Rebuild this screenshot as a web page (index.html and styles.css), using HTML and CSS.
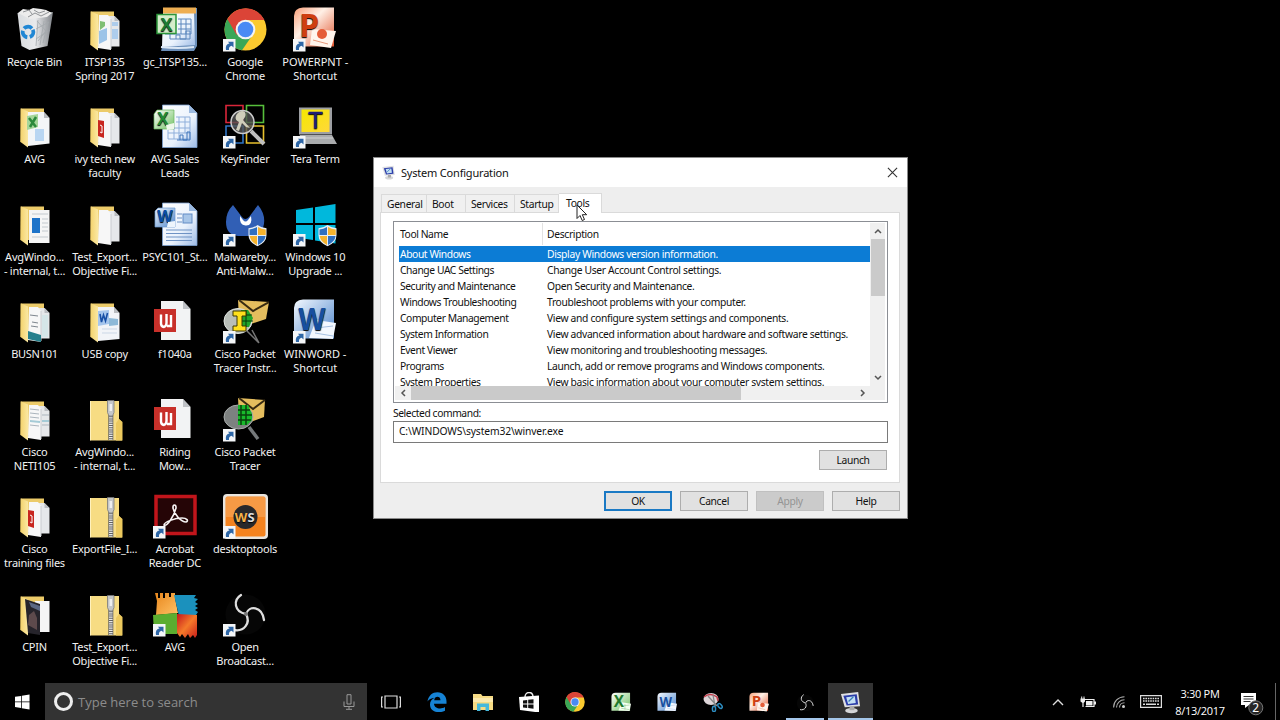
FILE: index.html
```
<!DOCTYPE html>
<html lang="en">
<head>
    <meta charset="UTF-8">
    <meta name="viewport" content="width=device-width, initial-scale=1.0">
    <title>System Configuration</title>
    <link rel="stylesheet" href="styles.css">
</head>
<body>
    <!-- Icon definitions -->
    <svg class="defs" width="0" height="0">
        <defs>
            <linearGradient id="gFolder" x1="0" x2="1"><stop offset="0" stop-color="#f3d26c"/><stop offset="1" stop-color="#fbe8a2"/></linearGradient>
            <linearGradient id="gPage" x1="0" y1="0" x2="1" y2="1"><stop offset="0" stop-color="#fff"/><stop offset=".6" stop-color="#eaf2fc"/><stop offset="1" stop-color="#9dbbe6"/></linearGradient>
            <linearGradient id="gGreen" x1="0" y1="0" x2="1" y2="1"><stop offset="0" stop-color="#fff"/><stop offset="1" stop-color="#72c263"/></linearGradient>
            <linearGradient id="gBlue" x1="0" y1="0" x2="1" y2="1"><stop offset="0" stop-color="#f4f9ff"/><stop offset="1" stop-color="#4e86cc"/></linearGradient>
            <linearGradient id="gRed" x1="0" y1="0" x2="1" y2="1"><stop offset="0" stop-color="#f9a17b"/><stop offset=".4" stop-color="#fff0e6"/><stop offset="1" stop-color="#e0532c"/></linearGradient>
            <linearGradient id="gBin" x1="0" x2="1"><stop offset="0" stop-color="#d9dcdf"/><stop offset=".5" stop-color="#e9eaec"/><stop offset="1" stop-color="#808489"/></linearGradient>
            <linearGradient id="gScreen" x1="0" y1="0" x2="1" y2="1"><stop offset="0" stop-color="#f5e800"/><stop offset="1" stop-color="#ffd83a"/></linearGradient>
            <linearGradient id="gOrange" x1="0" y1="0" x2="1" y2="1"><stop offset="0" stop-color="#e8861c"/><stop offset="1" stop-color="#ffc266"/></linearGradient>
            <linearGradient id="gAvgRed" x1="0" y1="0" x2="1" y2="1"><stop offset="0" stop-color="#c4161c"/><stop offset=".5" stop-color="#f47a2a"/><stop offset="1" stop-color="#c81d1a"/></linearGradient>

            <symbol id="shortcut" viewBox="0 0 48 48">
                <rect x="2" y="34" width="12.500" height="12.500" fill="#f4f6f8"/>
                <path d="M5 45c-.6-4 .8-6 3.500-6.400l-1.600-1.800h5.600v5.700l-1.800-1.700c-2 .3-3 1.600-2.700 4.200z" fill="#2d66a6"/>
            </symbol>
            <symbol id="shield" viewBox="0 0 48 48">
                <path d="M36.500 25q4 3 9 3.200v7q0 7-9 11-9-4-9-11v-7q5-.2 9-3.200z" fill="#e8eef4"/>
                <path d="M36 27v8h-7.500v-5.500q4-.3 7.500-2.500zM37 36h7.600q-.7 5.500-7.600 9z" fill="#2f6fc0"/>
                <path d="M37 27q3.500 2.200 7.700 2.500V35H37zM36 36v9q-6.500-3.500-7.300-9z" fill="#f5b32e"/>
            </symbol>
            <symbol id="folderBack" viewBox="0 0 48 48">
                <path d="M9.500 6.500h23.500v33.500H9.500z" fill="#eccb69"/>
                <path d="M10 6.500l7 3v36L9.500 40z" fill="url(#gFolder)"/>
            </symbol>
            <symbol id="pages" viewBox="0 0 48 48">
                <path d="M25 11h8.500l5 5v25.500H25z" fill="#e6e8ea"/>
                <path d="M18 10h9l3 4v31L17 43z" fill="#f7f7f7"/>
                <path d="M33.500 11v5h5z" fill="#b9bcc0"/>
                <path d="M30 14v30" stroke="#c9ccd0"/>
            </symbol>

            <symbol id="bin" viewBox="0 0 48 48">
                <path d="M6.500 8L42 7l-5.500 34-18 4-8-4z" fill="url(#gBin)"/>
                <path d="M7 8l5-4 6 1 4-2 8 1 5 1 6 3-5 4-17 2z" fill="#ececec"/>
                <path d="M12 7l6-2 3 4M23 5l5 3 6-2M17 12l7-4 6 3 8-4" stroke="#909396" fill="none"/>
                <path d="M27 15l-2 26M33 16l-4 24M37 18l-5 20M25 24l13-7M25 34l12-8M26 16l9 10-8 10" stroke="#a5a9ad" fill="none" stroke-width=".8"/>
                <circle cx="17" cy="27" r="5.300" fill="none" stroke="#2187d4" stroke-width="3.800" stroke-dasharray="8.600 2.500" transform="rotate(-25 17 27)"/>
            </symbol>
            <symbol id="folderDocs" viewBox="0 0 48 48">
                <use href="#folderBack"/><use href="#pages"/>
                <path d="M19 16l5 1v4l-5 4z" fill="#7fbf73"/><path d="M18 26l8-3v12l-8 4z" fill="#9cc4e8"/><path d="M31 17h6v4h-6zM31 24h6v10h-6z" fill="#aecdec"/>
            </symbol>
            <symbol id="folderExcel" viewBox="0 0 48 48">
                <use href="#folderBack"/>
                <path d="M17 10h16l5.500 6v25.500L17 44z" fill="#f4f6f8"/><path d="M33 10v6h5.500z" fill="#b9bcc0"/>
                <path d="M16 14l11-2v13l-11 3z" fill="#a5d69a"/><path d="M18 16l7 9M25 15l-6 10" stroke="#2c8a3c" stroke-width="2.500"/>
                <path d="M24 27h9v12h-9z" fill="#b9d6f2"/>
            </symbol>
            <symbol id="folderPdf" viewBox="0 0 48 48">
                <use href="#folderBack"/><use href="#pages"/>
                <path d="M17 18l6 1v17l-6-2z" fill="#c8271f"/><path d="M19 23l2 1v7l-2-1" fill="none" stroke="#fff"/>
            </symbol>
            <symbol id="folderNews" viewBox="0 0 48 48">
                <use href="#folderBack"/><path d="M18 10h20.500v33H18z" fill="#f5f5f5"/>
                <path d="M21 18h8v15h-8z" fill="#1d73c9"/><path d="M21 14h16M31 19h6M31 23h6M31 27h6M31 31h6M21 37h16" stroke="#c3c9ce"/>
            </symbol>
            <symbol id="folderPages" viewBox="0 0 48 48">
                <use href="#folderBack"/><use href="#pages"/>
            </symbol>
            <symbol id="folderBusn" viewBox="0 0 48 48">
                <use href="#folderBack"/><use href="#pages"/>
                <path d="M19 18l8 1M21 25l6 1M20 29l7 1" stroke="#7e868e"/><path d="M17 34l13 4v7l-13-3z" fill="#26808d"/><path d="M31 18h6v22h-6z" fill="#d5e6e8"/>
            </symbol>
            <symbol id="folderWord" viewBox="0 0 48 48">
                <use href="#folderBack"/>
                <path d="M17 10h16l5.500 6v26L17 44z" fill="#f2f4f8"/><path d="M33 10v6h5.500z" fill="#b9bcc0"/>
                <path d="M17 14l11-1v14l-11 2z" fill="#a6c6ed"/><path d="M19 17l1.500 8 2-7 2 6 2-8" stroke="#174fa6" stroke-width="1.600" fill="none"/>
                <path d="M28 21l9 1v6l-9 1z" fill="#8db9d8"/><path d="M21 32h15M21 36h15" stroke="#cbd7e6"/>
            </symbol>
            <symbol id="folderText" viewBox="0 0 48 48">
                <use href="#folderBack"/><use href="#pages"/>
                <path d="M19 14l9 1M19 18l9 1M19 22l9 1M19 30l9 1M31 20h7M31 30h7" stroke="#abb5bd"/><path d="M19 25l10 1v2l-10-1zM31 25h7v2h-7z" fill="#a5cbd6"/>
            </symbol>
            <symbol id="folderPhoto" viewBox="0 0 48 48">
                <use href="#folderBack"/><path d="M24 11h14.500v31H24z" fill="#f5f5f5"/>
                <path d="M14 9l15 5v31l-12-2z" fill="#26242b"/><path d="M18 25l5-4 3 7v12l-9-5z" fill="#5d4a4c"/><path d="M18 12l11 4v5l-9-4z" fill="#5b6884"/>
            </symbol>
            <symbol id="zip" viewBox="0 0 48 48">
                <path d="M9.500 6H38v18l3 3v18.500H9.500z" fill="#f7dc83"/><path d="M38 24l3.500 3v18.500H35V28z" fill="#ecc95e"/>
                <path d="M9.500 6v39.500" stroke="#fff1bd"/>
                <path d="M29.800 20v25" stroke="#606060" stroke-width="5"/><path d="M29.800 20v25" stroke="#e8e8e8" stroke-width="3.600" stroke-dasharray="1.200 1"/>
                <path d="M26.500 5.500h6.500v12l-1.500 3.500H28l-1.500-3.500z" fill="#c5c7c9" stroke="#77797b" stroke-width=".8"/><path d="M28.500 9v7h2.500V9z" fill="#efefef"/>
            </symbol>
            <symbol id="excelPad" viewBox="0 0 48 48">
                <path d="M12 3h34v38l-3 5H10l2-7z" fill="#6c8fb9"/><path d="M12 8h31l1 32-33 2z" fill="url(#gPage)"/><path d="M12 2.500h33v6H12z" fill="#eeae52"/>
                <path d="M27 14h13M27 19h13M27 24h13M14 29h26M30 14v15M35 14v15M40 14v15M19 29v5h20v-8h-4v8h-6v-4h-4v4" stroke="#5b86bd" fill="none"/>
                <path d="M10 42q18 2 33 0" stroke="#dbe7f5" fill="none" stroke-width="2"/>
                <rect x="6" y="9.500" width="19" height="19" fill="#d4edca" stroke="#2d963b" stroke-width="1.500"/><text x="15.500" y="25.500" class="ico-letter" font-size="18" fill="#1d7c32">X</text>
            </symbol>
            <symbol id="excelDoc" viewBox="0 0 48 48">
                <path d="M11.500 3H38l8 8v34.500H11.500z" fill="url(#gPage)" stroke="#7b9fcf" stroke-width=".8"/><path d="M38 3v8h8z" fill="#9bb9df"/>
                <path d="M25 15h14M25 20h14M17 26h22M17 31h22M17 37h22M17 26v11M23 26v11M28 15v22M34 15v16M39 15v22" stroke="#8fafdb" fill="none"/><path d="M26 38h13v-8h-3v8h-4v-5h-3v5" stroke="#3f74ba" fill="none"/>
                <path d="M6 8h17v19H3V12z" fill="url(#gGreen)" stroke="#68b45d" stroke-width=".7"/><text x="12" y="23" class="ico-letter" font-size="17" fill="#238a35">X</text><path d="M15 23l8-2v6l-7 1z" fill="#eef8ea"/>
            </symbol>
            <symbol id="wordDoc" viewBox="0 0 48 48">
                <path d="M11.500 3H38l8 8v34.500H11.500z" fill="url(#gPage)" stroke="#7b9fcf" stroke-width=".8"/><path d="M38 3v8h8z" fill="#9bb9df"/>
                <path d="M26 14h5M26 18h5M26 22h5M15 30h26M15 33.500h26M15 37h26M15 40.500h26" stroke="#6f93c4"/><rect x="32" y="14" width="9" height="9" fill="#a8c6e8" stroke="#628cc5"/>
                <path d="M7 8h17v19H4V11z" fill="url(#gBlue)" stroke="#6b98ce" stroke-width=".7"/><text x="14" y="22" class="ico-letter" font-size="16" fill="#0a4da5">W</text><path d="M17 22l7-1v6h-8z" fill="#eef5fc"/>
            </symbol>
            <symbol id="pdfDoc" viewBox="0 0 48 48">
                <path d="M10 4h22l7.500 8v31H10z" fill="#f2f3f4"/><path d="M32 4v8h7.500z" fill="#bec1c5"/>
                <rect x="3" y="12" width="22" height="23" fill="#c8302a"/>
                <path d="M10 17.500v9q0 3 3 3.500 2.500-1 2.500-4v-9M20 18v11h-4" stroke="#fff" stroke-width="2.400" fill="none"/>
            </symbol>
            <symbol id="acrobat" viewBox="0 0 48 48">
                <rect x="5" y="4.500" width="39" height="37" fill="#250506" stroke="#c1151b" stroke-width="3.500"/>
                <path d="M13 33c3 2 10-9 12-17 .4-4-3.500-4-3 0 1 6 8 14 13 14 3-1 1-4-4-4-7 0-18 4-18 7z" fill="none" stroke="#f6f3f3" stroke-width="1.600"/>
            </symbol>
            <symbol id="avg" viewBox="0 0 48 48">
                <path d="M4 3h3v5h2V3h3v5h2V3h4v4h2V3h4v5l3 15-22 2 1-14z" fill="url(#gOrange)"/>
                <path d="M23 5h22l-2 3 4 1-3 3 3 2-3 2 3 2-3 2 3 2-2 3-17 1z" fill="#1b91bd"/>
                <path d="M2 25l24-2v21H3z" fill="#5bad30"/>
                <path d="M26 24l20 1v20l-2 3-2-3-3 3-2-4-3 4-3-4-2 3-3-4z" fill="url(#gAvgRed)"/>
            </symbol>
            <symbol id="chrome" viewBox="0 0 48 48">
                <circle cx="24.500" cy="24.500" r="21" fill="#fbca2f"/>
                <path d="M24.500 24.500L6.300 14A21 21 0 0 0 21 45.200l11-16z" fill="#3aa757"/>
                <path d="M24.500 15h19A21 21 0 0 0 6.300 14l9.300 16z" fill="#db4437"/>
                <circle cx="24.500" cy="24.500" r="9.800" fill="#f4f4f4"/><circle cx="24.500" cy="24.500" r="7.800" fill="#4a8af4"/>
            </symbol>
            <symbol id="keyfinder" viewBox="0 0 48 48">
                <g fill="none" stroke-width="1.600"><path d="M5 3.500h17v17H5z" stroke="#d9263a"/><path d="M25.500 3.500h17v17h-17z" stroke="#56be3b"/><path d="M5 24h17v17H5z" stroke="#2f74c3"/><path d="M25.500 24h17v17h-17z" stroke="#e6c02d"/></g>
                <path d="M30 29l13 13" stroke="#bfbfbf" stroke-width="4"/>
                <circle cx="21.500" cy="20" r="11.500" fill="#555" fill-opacity=".8" stroke="#cbcbcb" stroke-width="1.500"/>
                <path d="M18 10c5-3 8 1 6 5l-2 3 7 8-4-1-4-4-3 8-3-1 3-8c-5-2-4-7 0-10z" fill="#d0cebb"/>
            </symbol>
            <symbol id="malware" viewBox="0 0 48 48">
                <path d="M12 5l9 12q3 4 7 0L37 5q9 11 5 23l-9 8H17Q5 35 5 22 5 12 12 5z" fill="#315fb5"/>
                <path d="M19 16l3 4q2.500 3 5 0l3-4q2 10-5.500 9.500Q18 25 19 16z" fill="#fff"/>
            </symbol>
            <symbol id="tracer" viewBox="0 0 48 48">
                <path d="M17 3l27 2-1 17-16 6-9-7z" fill="#e4bd5e"/><path d="M18 3l14 11L44 5" fill="none" stroke="#382b12" stroke-width="2"/>
                <path d="M28 32l9 12" stroke="#75797b" stroke-width="3.500"/>
                <ellipse cx="17.500" cy="22" rx="14.500" ry="12" fill="#7d8180" stroke="#a9adac"/>
                <path d="M17 10h10l4 9v6l-5 5h-9z" fill="#18b92b"/><path d="M20 10v20M25 10v20M17 15h12M17 20h14M17 25h13" stroke="#093f0e" stroke-width="1.500"/>
            </symbol>
            <symbol id="tracerI" viewBox="0 0 48 48">
                <path d="M17 3l31 2-3 17-18 6-9-7z" fill="#e4bd5e"/><path d="M18 3l14 11L48 5" fill="none" stroke="#382b12" stroke-width="2"/>
                <path d="M26 34l12 12M31 33l7 13" stroke="#777" stroke-width="1.500"/>
                <ellipse cx="17" cy="24" rx="14" ry="12.500" fill="#b8beb8" stroke="#e1e5e1"/>
                <path d="M20 13h7l5 8-4 9h-8z" fill="#20a52b"/><path d="M21 18h10M21 24h11M25 13v17" stroke="#073b09"/>
                <path d="M12 14h13v5h-4v10h4v5H12v-5h4V19h-4z" fill="#ffe01c" stroke="#3f3900"/>
            </symbol>
            <symbol id="ws" viewBox="0 0 48 48">
                <rect x="2" y="2" width="45" height="45" rx="4" fill="#e8e5df"/><rect x="4.500" y="4.500" width="40" height="40" rx="2" fill="#f4831f"/><path d="M5 5h39v20H5z" fill="#f69a45"/>
                <circle cx="24.500" cy="25" r="12" fill="#28282b"/><text x="20" y="30" class="ico-letter" font-size="13" fill="#f5b24a">W</text><text x="30" y="30" class="ico-letter" font-size="13" fill="#ddd">S</text>
            </symbol>
            <symbol id="obs" viewBox="0 0 48 48">
                <circle cx="24.500" cy="24.500" r="20" fill="#060606"/>
                <g fill="none" stroke="#dedede" stroke-width="2.300" stroke-linecap="round"><path d="M25 24C13 22 12 10 20 5"/><path d="M25 24c3-9 16-8 18 6"/><path d="M25 24c5 9-2 18-12 16"/></g><circle cx="25" cy="24" r="2" fill="#777"/>
            </symbol>
            <symbol id="powerpoint" viewBox="0 0 48 48">
                <path d="M12 2.500h31v39H3V11q0-8 9-8.500z" fill="url(#gRed)"/>
                <path d="M21 24l24 2-5 17-21-3z" fill="#fff5ed"/><circle cx="31" cy="29" r="5" fill="#e55d38"/><path d="M22 35l15 4" stroke="#e69a7c"/>
                <text x="18" y="32" class="ico-letter" font-size="32" fill="#cf3f10">P</text>
            </symbol>
            <symbol id="word" viewBox="0 0 48 48">
                <path d="M12 2.500h31v39H3V11q0-8 9-8.500z" fill="url(#gBlue)"/>
                <path d="M25 23l20 3-3 16-24-1z" fill="#f3f8ff"/><path d="M25 31l17-2M24 36l18 3" stroke="#a6c1e2"/>
                <text x="21" y="33" class="ico-letter" font-size="31" textLength="27" lengthAdjust="spacingAndGlyphs" fill="#174f9f">W</text>
            </symbol>
            <symbol id="excel" viewBox="0 0 48 48">
                <path d="M12 2.500h31v39H3V11q0-8 9-8.500z" fill="url(#gGreen)"/>
                <path d="M25 23l20 3-3 16-24-1z" fill="#f4fff1"/><path d="M25 31l17-2M24 36l18 3M32 27v12" stroke="#80bd77"/>
                <text x="19" y="34" class="ico-letter" font-size="33" fill="#217a2d">X</text>
            </symbol>
            <symbol id="teraterm" viewBox="0 0 48 48">
                <path d="M8 5.500h33v27H8z" fill="#9d9fa3"/><path d="M10.500 7.500h28V30h-28z" fill="url(#gScreen)"/>
                <path d="M9 33h32l5 9H5z" fill="#a9abad"/><path d="M8 36h34" stroke="#d0d1d2"/>
                <text x="24.500" y="26" class="ico-letter thin" font-size="22" fill="#25258c">T</text>
            </symbol>
            <symbol id="win10" viewBox="0 0 48 48">
                <path d="M5 10l17-2.500V23H5zM24 7.200L44.500 4v19H24zM5 25h17v15L5 37.500zM24 25h20.500v18.500L24 40.500z" fill="#00b8dc"/>
            </symbol>
            <symbol id="monitor" viewBox="0 0 24 24">
                <path d="M2 3l18-2 2 15-16 1z" fill="#dedfe2"/><path d="M4.500 5l14-1.600 1.500 10.600-12 1z" fill="#2b3da9"/><path d="M7.500 6.500l9-1 1 7-8 1z" fill="#c3dff5"/>
                <path d="M10 11l5-5" stroke="#397fb7" stroke-width="1.300"/><ellipse cx="13" cy="20.500" rx="6.500" ry="2.800" fill="#d5d6d8"/><path d="M11 16h5v4h-5z" fill="#aaa"/>
            </symbol>
        </defs>
    </svg>

    <!-- Desktop icons, filled column by column -->
    <main class="desktop">
        <div class="item"><svg><use href="#bin"/></svg><span>Recycle Bin</span></div>
        <div class="item"><svg><use href="#folderExcel"/></svg><span>AVG</span></div>
        <div class="item"><svg><use href="#folderNews"/></svg><span>AvgWindo...<br>- internal, t...</span></div>
        <div class="item"><svg><use href="#folderBusn"/></svg><span>BUSN101</span></div>
        <div class="item"><svg><use href="#folderText"/></svg><span>Cisco<br>NETI105</span></div>
        <div class="item"><svg><use href="#folderPdf"/></svg><span>Cisco<br>training files</span></div>
        <div class="item"><svg><use href="#folderPhoto"/></svg><span>CPIN</span></div>

        <div class="item"><svg><use href="#folderDocs"/></svg><span>ITSP135<br>Spring 2017</span></div>
        <div class="item"><svg><use href="#folderPdf"/></svg><span>ivy tech new<br>faculty</span></div>
        <div class="item"><svg><use href="#folderPages"/></svg><span>Test_Export...<br>Objective Fi...</span></div>
        <div class="item"><svg><use href="#folderWord"/></svg><span>USB copy</span></div>
        <div class="item"><svg><use href="#zip"/></svg><span>AvgWindo...<br>- internal, t...</span></div>
        <div class="item"><svg><use href="#zip"/></svg><span>ExportFile_I...</span></div>
        <div class="item"><svg><use href="#zip"/></svg><span>Test_Export...<br>Objective Fi...</span></div>

        <div class="item"><svg><use href="#excelPad"/></svg><span>gc_ITSP135...</span></div>
        <div class="item"><svg><use href="#excelDoc"/></svg><span>AVG Sales<br>Leads</span></div>
        <div class="item"><svg><use href="#wordDoc"/></svg><span>PSYC101_St...</span></div>
        <div class="item"><svg><use href="#pdfDoc"/></svg><span>f1040a</span></div>
        <div class="item"><svg><use href="#pdfDoc"/></svg><span>Riding<br>Mow...</span></div>
        <div class="item"><svg><use href="#acrobat"/><use href="#shortcut"/></svg><span>Acrobat<br>Reader DC</span></div>
        <div class="item"><svg><use href="#avg"/><use href="#shortcut"/></svg><span>AVG</span></div>

        <div class="item"><svg><use href="#chrome"/><use href="#shortcut"/></svg><span>Google<br>Chrome</span></div>
        <div class="item"><svg><use href="#keyfinder"/><use href="#shortcut"/></svg><span>KeyFinder</span></div>
        <div class="item"><svg><use href="#malware"/><use href="#shield"/><use href="#shortcut"/></svg><span>Malwareby...<br>Anti-Malw...</span></div>
        <div class="item"><svg><use href="#tracerI"/><use href="#shortcut"/></svg><span>Cisco Packet<br>Tracer Instr...</span></div>
        <div class="item"><svg><use href="#tracer"/><use href="#shortcut"/></svg><span>Cisco Packet<br>Tracer</span></div>
        <div class="item"><svg><use href="#ws"/><use href="#shortcut"/></svg><span>desktoptools</span></div>
        <div class="item"><svg><use href="#obs"/><use href="#shortcut"/></svg><span>Open<br>Broadcast...</span></div>

        <div class="item wide"><svg><use href="#powerpoint"/><use href="#shortcut"/></svg><span>POWERPNT -<br>Shortcut</span></div>
        <div class="item"><svg><use href="#teraterm"/><use href="#shortcut"/></svg><span>Tera Term</span></div>
        <div class="item"><svg><use href="#win10"/><use href="#shield"/><use href="#shortcut"/></svg><span>Windows 10<br>Upgrade ...</span></div>
        <div class="item wide"><svg><use href="#word"/><use href="#shortcut"/></svg><span>WINWORD -<br>Shortcut</span></div>
    </main>

    <!-- System Configuration window -->
    <section class="window">
        <header class="titlebar">
            <svg class="title-icon"><use href="#monitor"/></svg>
            <h1>System Configuration</h1>
            <svg class="close" viewBox="0 0 12 12"><path d="M1 1l10 10M11 1L1 11" stroke="#333" stroke-width="1.200"/></svg>
        </header>
        <nav class="tabs">
            <span class="tab general">General</span>
            <span class="tab boot">Boot</span>
            <span class="tab services">Services</span>
            <span class="tab startup">Startup</span>
            <span class="tab active">Tools</span>
        </nav>
        <div class="panel">
            <div class="list">
                <div class="list-top">
                    <div class="rows">
                        <div class="row head"><span>Tool Name</span><span>Description</span></div>
                        <div class="row selected"><span>About Windows</span><span>Display Windows version information.</span></div>
                        <div class="row"><span>Change UAC Settings</span><span>Change User Account Control settings.</span></div>
                        <div class="row"><span>Security and Maintenance</span><span>Open Security and Maintenance.</span></div>
                        <div class="row"><span>Windows Troubleshooting</span><span>Troubleshoot problems with your computer.</span></div>
                        <div class="row"><span>Computer Management</span><span>View and configure system settings and components.</span></div>
                        <div class="row"><span>System Information</span><span>View advanced information about hardware and software settings.</span></div>
                        <div class="row"><span>Event Viewer</span><span>View monitoring and troubleshooting messages.</span></div>
                        <div class="row"><span>Programs</span><span>Launch, add or remove programs and Windows components.</span></div>
                        <div class="row"><span>System Properties</span><span>View basic information about your computer system settings.</span></div>
                    </div>
                    <div class="vscroll">
                        <svg viewBox="0 0 8 6"><path d="M1 5l3-3 3 3"/></svg>
                        <div class="vthumb"></div>
                        <svg class="down" viewBox="0 0 8 6"><path d="M1 1l3 3 3-3"/></svg>
                    </div>
                </div>
                <div class="hscroll">
                    <svg viewBox="0 0 6 8"><path d="M5 1L2 4l3 3"/></svg>
                    <div class="hthumb"></div>
                    <svg class="right" viewBox="0 0 6 8"><path d="M1 1l3 3-3 3"/></svg>
                </div>
            </div>
            <div class="cmd-label">Selected command:</div>
            <div class="cmd">C:\WINDOWS\system32\winver.exe</div>
            <div class="launch-row"><button>Launch</button></div>
        </div>
        <footer class="buttons">
            <button class="default">OK</button>
            <button>Cancel</button>
            <button disabled>Apply</button>
            <button>Help</button>
        </footer>
    </section>

    <svg class="cursor" viewBox="0 0 12 18"><path d="M1 1v13.500l3-3 2.200 5 2.300-1-2.200-4.800h4.400z" fill="#fff" stroke="#222"/></svg>

    <footer class="taskbar">
        <div class="start"><svg viewBox="0 0 16 16"><path d="M0 2.500l6.500-1v6H0zM7.300 1.300L15.500 0v7.500H7.300zM0 8.300h6.500v6L0 13.400zM7.300 8.300h8.200V16l-8.200-1.300z" fill="#fff"/></svg></div>
        <div class="search">
            <span class="cortana"></span>
            <span class="placeholder">Type here to search</span>
            <svg class="mic" viewBox="0 0 12 16"><path d="M4 .7h4v9.300H4zM1 7.500v5h10v-5M6 12.500V15M3 15.300h6" fill="none" stroke="#999"/></svg>
        </div>
        <div class="apps">
            <div class="app"><svg viewBox="0 0 20 20"><path d="M4 4h12v12H4zM2 5H.6v10H2M18 5h1.400v10H18" fill="none" stroke="#ddd" stroke-width="1.200"/></svg></div>
            <div class="app"><svg viewBox="0 0 20 20"><path d="M.5 9.500C1.500 3.500 5.500.3 10.500.3c5.500 0 9 4 9 9v2.500H7c.2 5 7 6 11 3.300v3.700C12 21.800 3 20 3 12.500c0-3 1.700-5.300 4.500-6.700-3.200.3-5.700 1.800-7 3.700zM7.200 8.200h6.300c0-4.500-6-4.500-6.300 0z" fill="#1683d5"/></svg></div>
            <div class="app"><svg viewBox="0 0 20 20"><path d="M0 2h8l1.500 2H20v14H0z" fill="#f6db84"/><path d="M0 6h20v4H0z" fill="#fbe9ad"/><path d="M4 19v-7.500h12V19h-3.500v-4h-5v4z" fill="#46b9dc"/></svg></div>
            <div class="app"><svg viewBox="0 0 20 20"><path d="M6 5c0-6 8-6 8 0" fill="none" stroke="#eee" stroke-width="1.400"/><path d="M0 5l20-1.500v17L1 18z" fill="#fff"/><path d="M4 8.500l4.200-.5v3.500H4zM9.200 7.800l5.300-.6v4.300H9.200zM4 12.500h4.200v3.400L4 15.500zM9.200 12.500h5.300v4.200L9.200 16z" fill="#111"/></svg></div>
            <div class="app"><svg viewBox="3 3 43 43"><use href="#chrome" width="48" height="48"/></svg></div>
            <div class="app"><svg viewBox="2 1 43 43"><use href="#excel" width="48" height="48"/></svg></div>
            <div class="app"><svg viewBox="2 1 43 43"><use href="#word" width="48" height="48"/></svg></div>
            <div class="app"><svg viewBox="0 0 20 20"><ellipse cx="8" cy="7" rx="7.500" ry="6" fill="#ddd5d8"/><path d="M1 5q6-5 13 0l1 4" stroke="#c33b49" fill="none" stroke-width="1.500"/><path d="M5 4l9 10M10 3l2 11" stroke="#888" stroke-width="1.300"/><g fill="none" stroke="#2d8ec2" stroke-width="1.500"><ellipse cx="11" cy="17" rx="1.600" ry="2.700"/><ellipse cx="17" cy="14" rx="1.700" ry="2.700" transform="rotate(-40 17 14)"/></g></svg></div>
            <div class="app"><svg viewBox="2 1 43 43"><use href="#powerpoint" width="48" height="48"/></svg></div>
            <div class="app running"><svg class="small" viewBox="5 3 40 40"><use href="#obs" width="48" height="48"/></svg></div>
            <div class="app current"><svg class="big" viewBox="0 0 24 24"><use href="#monitor"/></svg></div>
        </div>
        <div class="tray">
            <svg class="up" viewBox="0 0 12 8"><path d="M1 7l5-5 5 5" fill="none" stroke="#ddd" stroke-width="1.400"/></svg>
            <svg class="power" viewBox="0 0 16 12"><path d="M4.500 3.500H14v7H5.500" fill="none" stroke="#eee" stroke-width="1.200"/><path d="M6 5h6.500v4.500H6zM14 5.500h2v3h-2zM.5 2.500h4.500v3L3.500 7h-1L.5 5.500zM1.200.5h1v2h-1zM3.500.5h1v2h-1zM2.400 7h1.200v4H2.400z" fill="#eee"/></svg>
            <svg class="wifi" viewBox="0 0 12 12"><g fill="none" stroke="#aaa" stroke-width="1.100"><path d="M.6 11.500C.6 5.500 5 1 11.500.8M3.500 11.500c0-4.200 3.500-7.700 8-7.700M6.500 11.500c0-2.700 2-4.800 5-4.800"/></g><circle cx="10.500" cy="10.500" r="1.500" fill="#ccc"/></svg>
            <svg class="keyboard" viewBox="0 0 22 13"><path d="M.6.600h20.800v11.800H.6z" fill="none" stroke="#ddd" stroke-width="1.200"/><path d="M3 3.500h16M3 6h16" stroke="#ddd" stroke-width="1.400" stroke-dasharray="1.600 .8"/><path d="M3 9.200h2M6 9.200h10M17 9.200h2" stroke="#ddd" stroke-width="1.400"/></svg>
            <div class="clock">3:30 PM<br>8/13/2017</div>
            <svg class="notify" viewBox="0 0 24 24"><path d="M1 1h15v12H9l-4 3v-3H1z" fill="#fff"/><path d="M3.500 4.500h10M3.500 7h10M3.500 9.500h7" stroke="#333"/><circle cx="15.800" cy="15.800" r="7" fill="#262626" stroke="#777"/><text x="15.800" y="20" class="badge">2</text></svg>
        </div>
        <div class="peek"></div>
    </footer>
</body>
</html>
```

FILE: styles.css
```
* {
    box-sizing: border-box;
}

body {
    margin: 0;
    width: 1280px;
    height: 720px;
    overflow: hidden;
    position: relative;
    display: flex;
    flex-direction: column;
    background: #000;
    font-family: 'Noto Sans', 'Open Sans', sans-serif;
}

.defs {
    position: absolute;
}

.ico-letter {
    font-family: 'Open Sans', sans-serif;
    font-weight: bold;
    text-anchor: middle;
    letter-spacing: 0;
}

.ico-letter.thin {
    font-family: 'DejaVu Sans', sans-serif;
    font-weight: normal;
    stroke: #25258c;
    stroke-width: 0.5px;
}

/* Desktop */
.desktop {
    height: 683px;
    display: grid;
    grid-template-rows: repeat(7, 97.6px);
    grid-auto-columns: 70.2px;
    grid-auto-flow: column;
    justify-content: start;
    align-content: start;
    margin-left: -0.6px;
}

.item {
    display: flex;
    flex-direction: column;
    align-items: center;
    padding-top: 4.500px;
    color: #f2f2f2;
    font-size: 11px;
    line-height: 14px;
    letter-spacing: -0.25px;
    text-align: center;
    white-space: nowrap;
    text-shadow: 0 1px 1px #000;
}

.item.wide {
    letter-spacing: 0;
}

.item svg {
    width: 48px;
    height: 48px;
    flex: none;
    margin-bottom: 2px;
}

/* Window */
.window {
    position: absolute;
    left: 373px;
    top: 157px;
    width: 535px;
    height: 362px;
    border: 1px solid #8a8a8a;
    background: #eee;
    color: #111;
    font-size: 10.3px;
    letter-spacing: -0.34px;
}

.titlebar {
    height: 29px;
    display: flex;
    align-items: center;
    padding: 0 9px 0 7px;
    background: #fff;
}

.title-icon {
    width: 15px;
    height: 15px;
}

.titlebar h1 {
    margin: 0 auto 1px 5px;
    font-size: 11px;
    font-weight: normal;
    letter-spacing: -0.2px;
}

.close {
    width: 11px;
    height: 11px;
    margin-bottom: 1px;
}

.tabs {
    height: 25px;
    padding-left: 7px;
    display: flex;
    align-items: flex-end;
}

.tab {
    height: 18px;
    line-height: 18px;
    padding-left: 5px;
    border: 1px solid #dadada;
    border-width: 1px 1px 0 0;
    background: #f0f0f0;
}

.general {
    width: 46px;
    border-left-width: 1px;
}

.boot {
    width: 39px;
}

.services {
    width: 49px;
}

.startup {
    width: 44px;
}

.tab.active {
    width: 43px;
    height: 20px;
    margin-bottom: -1px;
    padding-left: 7px;
    background: #fff;
    z-index: 1;
}

.panel {
    width: 520px;
    height: 271px;
    margin-left: 6px;
    padding: 8px 11px 0 12px;
    border: 1px solid #dadada;
    background: #fff;
}

.list {
    height: 182px;
    border: 1px solid #8b8e94;
    padding: 1px 2px 2px 1px;
    display: flex;
    flex-direction: column;
}

.list-top {
    height: 163px;
    display: flex;
}

.rows {
    flex: 1;
    padding-left: 4px;
    overflow: hidden;
}

.row {
    height: 16px;
    line-height: 16px;
    display: grid;
    grid-template-columns: 143px 1fr;
    white-space: nowrap;
}

.row span {
    padding-left: 1px;
    letter-spacing: -0.42px;
}

.row span + span {
    padding-left: 5px;
    letter-spacing: -0.33px;
}

.row.head {
    height: 21px;
    line-height: 22px;
    margin-bottom: 2px;
}

.row.head span + span {
    border-left: 1px solid #e2e2e2;
    padding-left: 4px;
}

.row.selected {
    background: #0c7cd5;
    color: #fff;
}

.vscroll {
    width: 15px;
    background: #f0f0f0;
    display: flex;
    flex-direction: column;
    align-items: center;
}

.list svg {
    fill: none;
    stroke: #555;
    stroke-width: 1.5;
    flex: none;
}

.vscroll svg {
    width: 8px;
    height: 6px;
    margin: 5px 0;
}

.vthumb {
    width: 14px;
    height: 57px;
    background: #cacaca;
}

.vscroll .down {
    margin-top: auto;
}

.hscroll {
    height: 14px;
    background: #f0f0f0;
    display: flex;
    align-items: center;
}

.hscroll svg {
    width: 6px;
    height: 8px;
    margin: 0 5px;
}

.hthumb {
    width: 330px;
    height: 14px;
    background: #cacaca;
}

.hscroll .right {
    margin-left: auto;
    margin-right: 19px;
}

.cmd-label {
    height: 18px;
    line-height: 20px;
    letter-spacing: -0.42px;
}

.cmd {
    height: 22px;
    line-height: 18px;
    padding-left: 5px;
    border: 1px solid #7a7a7a;
    letter-spacing: -0.14px;
}

.launch-row {
    display: flex;
    justify-content: flex-end;
    margin-top: 7px;
    padding-right: 1px;
}

button {
    width: 68px;
    height: 20px;
    padding: 0;
    border: 1px solid #adadad;
    background: #e1e1e1;
    color: #111;
    font: inherit;
    letter-spacing: inherit;
}

button.default {
    border: 2px solid #1a79c4;
}

button:disabled {
    background: #cbcbcb;
    border-color: #c0c0c0;
    color: #949494;
}

.buttons {
    display: flex;
    justify-content: flex-end;
    gap: 8px;
    padding: 8px 7px 0 0;
}

.cursor {
    position: absolute;
    left: 576px;
    top: 204px;
    width: 12px;
    height: 18px;
    z-index: 2;
}

/* Taskbar */
.taskbar {
    height: 37px;
    display: flex;
    color: #fff;
}

.start {
    width: 45px;
    display: flex;
    align-items: center;
    justify-content: center;
}

.start svg {
    width: 15px;
    height: 16px;
}

.search {
    width: 322px;
    display: flex;
    align-items: center;
    padding: 0 12px 0 9px;
    background: #333;
}

.cortana {
    width: 19px;
    height: 19px;
    border: 3px solid #eee;
    border-radius: 50%;
}

.placeholder {
    margin: 0 auto 0 5px;
    color: #8c8c8c;
    font-family: 'Open Sans', sans-serif;
    font-size: 13px;
}

.mic {
    width: 12px;
    height: 16px;
}

.apps {
    display: flex;
}

.app {
    width: 46.1px;
    display: flex;
    align-items: center;
    justify-content: center;
    border-bottom: 2px solid transparent;
    padding: 3px 0 0 1px;
}

.app svg {
    width: 20px;
    height: 20px;
}

.app .small {
    width: 17px;
    height: 17px;
}

.app .big {
    width: 23px;
    height: 23px;
}

.running {
    width: 38px;
    margin: 0 4px;
    border-bottom-color: #a4c6ea;
}

.current {
    width: 45px;
    background: #333;
    border-bottom-color: #a4c6ea;
}

.tray {
    margin-left: auto;
    display: flex;
    align-items: center;
}

.up {
    width: 12px;
    height: 8px;
    margin-right: 16px;
}

.power {
    width: 16px;
    height: 12px;
    margin-right: 17px;
}

.wifi {
    width: 12px;
    height: 12px;
    margin-right: 15px;
}

.keyboard {
    width: 22px;
    height: 13px;
}

.clock {
    width: 78px;
    padding-right: 2px;
    font-family: 'Open Sans', sans-serif;
    font-size: 11px;
    line-height: 17px;
    text-align: center;
    letter-spacing: -0.3px;
}

.notify {
    width: 24px;
    height: 24px;
    margin-top: 5px;
}

.badge {
    fill: #fff;
    font-size: 12px;
    text-anchor: middle;
}

.peek {
    width: 1px;
    margin: 0 4px 0 11px;
    background: #666;
}
```
